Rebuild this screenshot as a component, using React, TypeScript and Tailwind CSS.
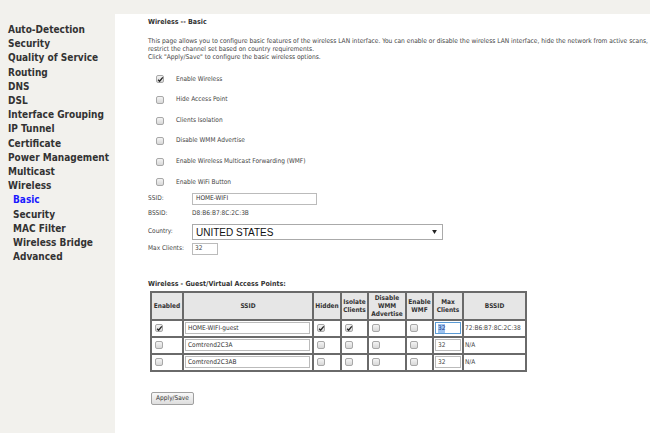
import React from "react";

const F = { fontFamily: '"DejaVu Sans Condensed", "Liberation Sans", sans-serif' };

function Box({ checked = false }: { checked?: boolean }) {
  return (
    <span className="relative block w-[8px] h-[8px] rounded-[2px] border border-[#a8a8a8] bg-gradient-to-b from-[#f4f4f4] to-[#d8d8d8]">
      {checked && (
        <svg viewBox="0 0 8 8" className="absolute left-[0px] top-[0px] w-[7px] h-[7px]">
          <path d="M1.3 4.2 L3 5.9 L6.6 1.6" stroke="#222" strokeWidth="1.5" fill="none" />
        </svg>
      )}
    </span>
  );
}

const sideItems = [
  "Auto-Detection",
  "Security",
  "Quality of Service",
  "Routing",
  "DNS",
  "DSL",
  "Interface Grouping",
  "IP Tunnel",
  "Certificate",
  "Power Management",
  "Multicast",
  "Wireless",
];
const subItems = ["Basic", "Security", "MAC Filter", "Wireless Bridge", "Advanced"];

const checks = [
  ["Enable Wireless", true],
  ["Hide Access Point", false],
  ["Clients Isolation", false],
  ["Disable WMM Advertise", false],
  ["Enable Wireless Multicast Forwarding (WMF)", false],
  ["Enable WiFi Button", false],
] as const;

const rows = [
  { en: true, ssid: "HOME-WIFI-guest", hid: true, iso: true, bssid: "72:B6:B7:8C:2C:38", focus: true },
  { en: false, ssid: "Comtrend2C3A", hid: false, iso: false, bssid: "N/A", focus: false },
  { en: false, ssid: "Comtrend2C3AB", hid: false, iso: false, bssid: "N/A", focus: false },
];

const cell = "border-2 border-[#6a6a6a]";

export default function App() {
  return (
    <div className="w-[650px] h-[433px] overflow-hidden bg-[#f2f1ed] flex flex-col" style={F}>
      <div className="h-[14px] shrink-0" />
      <div className="flex flex-1 min-h-0">
        <div className="w-[115px] shrink-0 pt-[9px] pl-[8px] text-[10px] font-bold text-[#333] leading-[14.2px] whitespace-nowrap">
          {sideItems.map((s) => (
            <div key={s}>{s}</div>
          ))}
          {subItems.map((s, i) => (
            <div key={s + i} className={"pl-[5px] " + (i === 0 ? "text-[#1a1aff]" : "")}>
              {s}
            </div>
          ))}
        </div>
        <div className="flex-1 min-w-0 overflow-hidden bg-white pl-[33px] text-[#444] whitespace-nowrap">
          <div className="pt-[3px] text-[7px] font-bold leading-[10px] text-[#333]">Wireless -- Basic</div>
          <div className="mt-[10px] text-[6.6px] leading-[8px]">
            <div>
              This page allows you to configure basic features of the wireless LAN interface. You can enable or disable the wireless LAN interface, hide the network from active scans,
            </div>
            <div>restrict the channel set based on country requirements.</div>
            <div>Click "Apply/Save" to configure the basic wireless options.</div>
          </div>
          <div className="mt-[8.2px]">
            {checks.map(([label, c]) => (
              <div key={label} className="h-[20.6px] flex items-center text-[6.5px]">
                <div className="w-[28px] pl-[8px] flex items-center">
                  <Box checked={c} />
                </div>
                <span>{label}</span>
              </div>
            ))}
          </div>
          <div className="text-[6.5px]">
            <div className="h-[13px] flex items-center">
              <div className="w-[44px]">SSID:</div>
              <div className="w-[125px] h-[12px] border border-[#bbb] flex items-center pl-[3px] text-[#333]">HOME-WIFI</div>
            </div>
            <div className="h-[16px] flex items-center">
              <div className="w-[44px]">BSSID:</div>
              <div>D8:B6:B7:8C:2C:3B</div>
            </div>
            <div className="h-[20.5px] flex items-center">
              <div className="w-[44px]">Country:</div>
              <div className="w-[251px] h-[16px] border border-[#aaa] flex items-center justify-between pl-[3px] pr-[5px]">
                <span className="text-[10px] text-[#111]" style={{ fontFamily: '"Liberation Sans", sans-serif' }}>
                  UNITED STATES
                </span>
                <svg viewBox="0 0 6 5" className="w-[5px] h-[4px]">
                  <path d="M0 0 H6 L3 5 Z" fill="#222" />
                </svg>
              </div>
            </div>
            <div className="h-[13px] flex items-center">
              <div className="w-[44px]">Max Clients:</div>
              <div className="w-[26px] h-[12px] border border-[#bbb] flex items-center pl-[2px]">32</div>
            </div>
          </div>
          <div className="mt-[23.7px] text-[7px] font-bold leading-[10px] text-[#333]">
            Wireless - Guest/Virtual Access Points:
          </div>
          <table className="mt-[2px] ml-[2px] table-fixed border-collapse border-2 border-[#6a6a6a] text-[6.5px] w-[375px]">
            <colgroup>
              <col className="w-[32px]" />
              <col className="w-[130px]" />
              <col className="w-[28px]" />
              <col className="w-[27px]" />
              <col className="w-[38px]" />
              <col className="w-[27px]" />
              <col className="w-[30px]" />
              <col className="w-[63px]" />
            </colgroup>
            <thead>
              <tr className="h-[28px] bg-[#e6e6e6] text-[#333] font-bold leading-[8px]">
                <th className={cell}>Enabled</th>
                <th className={cell}>SSID</th>
                <th className={cell}>Hidden</th>
                <th className={cell}>
                  Isolate
                  <br />
                  Clients
                </th>
                <th className={cell}>
                  Disable
                  <br />
                  WMM
                  <br />
                  Advertise
                </th>
                <th className={cell}>
                  Enable
                  <br />
                  WMF
                </th>
                <th className={cell}>
                  Max
                  <br />
                  Clients
                </th>
                <th className={cell}>BSSID</th>
              </tr>
            </thead>
            <tbody>
              {rows.map((r) => (
                <tr key={r.ssid} className="h-[17px]">
                  <td className={cell + " pl-[3px]"}>
                    <Box checked={r.en} />
                  </td>
                  <td className={cell + " pl-[1px]"}>
                    <div className="w-[125px] h-[12px] border border-[#bbb] flex items-center pl-[2px] text-[#333]">{r.ssid}</div>
                  </td>
                  <td className={cell + " pl-[3px]"}>
                    <Box checked={r.hid} />
                  </td>
                  <td className={cell + " pl-[3px]"}>
                    <Box checked={r.iso} />
                  </td>
                  <td className={cell + " pl-[3px]"}>
                    <Box />
                  </td>
                  <td className={cell + " pl-[3px]"}>
                    <Box />
                  </td>
                  <td className={cell + " pl-[1px]"}>
                    <div
                      className={
                        "w-[26px] h-[12px] border flex items-center pl-[2px] " +
                        (r.focus ? "border-[#5b9bd5]" : "border-[#bbb]")
                      }
                    >
                      {r.focus ? <span className="bg-[#9ec3ef] text-[#1e3c8c]">32</span> : "32"}
                    </div>
                  </td>
                  <td className={cell + " pl-[1px] overflow-hidden"}>{r.bssid}</td>
                </tr>
              ))}
            </tbody>
          </table>
          <div className="mt-[20px] ml-[3px] flex">
            <div className="flex items-center justify-center w-[43px] h-[13px] border border-[#a0a0a0] rounded-[2px] bg-gradient-to-b from-[#f8f8f8] to-[#dedede] text-[6.5px] leading-[8px] text-[#333]">
              Apply/Save
            </div>
          </div>
        </div>
      </div>
    </div>
  );
}
